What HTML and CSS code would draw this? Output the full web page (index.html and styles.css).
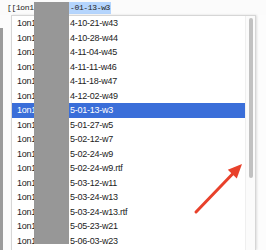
FILE: index.html
```html
<!DOCTYPE html>
<html>
<head>
<meta charset="utf-8">
<link rel="stylesheet" href="styles.css">
</head>
<body>
<div class="page">
  <div class="editor-line"><span class="pre">[[1on1 </span><span class="sel">-01-13-w3</span></div>
  <div class="body-row">
    <div class="leftbar"></div>
    <div class="popup">
      <div class="list">
        <div class="row"><span class="name">1on1</span><span class="rest">4-10-21-w43</span></div>
        <div class="row"><span class="name">1on1</span><span class="rest">4-10-28-w44</span></div>
        <div class="row"><span class="name">1on1</span><span class="rest">4-11-04-w45</span></div>
        <div class="row"><span class="name">1on1</span><span class="rest">4-11-11-w46</span></div>
        <div class="row"><span class="name">1on1</span><span class="rest">4-11-18-w47</span></div>
        <div class="row"><span class="name">1on1</span><span class="rest">4-12-02-w49</span></div>
        <div class="row selected"><span class="name">1on1</span><span class="rest">5-01-13-w3</span></div>
        <div class="row"><span class="name">1on1</span><span class="rest">5-01-27-w5</span></div>
        <div class="row"><span class="name">1on1</span><span class="rest">5-02-12-w7</span></div>
        <div class="row"><span class="name">1on1</span><span class="rest">5-02-24-w9</span></div>
        <div class="row"><span class="name">1on1</span><span class="rest">5-02-24-w9.rtf</span></div>
        <div class="row"><span class="name">1on1</span><span class="rest">5-03-12-w11</span></div>
        <div class="row"><span class="name">1on1</span><span class="rest">5-03-24-w13</span></div>
        <div class="row"><span class="name">1on1</span><span class="rest">5-03-24-w13.rtf</span></div>
        <div class="row"><span class="name">1on1</span><span class="rest">5-05-23-w21</span></div>
        <div class="row"><span class="name">1on1</span><span class="rest">5-06-03-w23</span></div>
      </div>
      <div class="scrolltrack"><div class="thumb"></div></div>
    </div>
  </div>
  <div class="redact"></div>
  <svg class="arrow" width="266" height="250" viewBox="0 0 266 250">
    <line x1="196" y1="212" x2="233" y2="173.5" stroke="#e8412b" stroke-width="3" stroke-linecap="round"/>
    <polygon points="242,164 236.8,178.5 227.8,169.8" fill="#e8412b"/>
  </svg>
</div>
</body>
</html>
```
FILE: styles.css
```css
html, body {
  margin: 0;
  padding: 0;
}
body {
  background: #f6f6f6;
  width: 266px;
  height: 250px;
  overflow: hidden;
}
.page {
  position: relative;
  width: 266px;
  height: 250px;
  overflow: hidden;
  background: #fafafa;
}
.editor-line {
  height: 15px;
  display: flex;
  align-items: center;
  padding-left: 7px;
  font-family: "Liberation Mono", "DejaVu Sans Mono", monospace;
  font-size: 8px;
  letter-spacing: -0.35px;
  color: #222;
  background: #fbfbfb;
}
.pre {
  width: 62px;
  white-space: pre;
}
.sel {
  background: #b5d5fd;
  padding: 1px 1px 1px 1px;
  line-height: 10px;
}
.body-row {
  display: flex;
  height: 235px;
  background: #fcfcfc;
}
.leftbar {
  width: 3px;
  margin-top: 13px;
  background: #9b9b9b;
}
.popup {
  margin-left: 8px;
  width: 243px;
  border: 1px solid #d6d6d6;
  border-bottom: none;
  background: #fff;
  display: flex;
  box-shadow: 1px 0 2px rgba(0,0,0,0.12);
}
.list {
  flex: 1;
  display: flex;
  flex-direction: column;
}
.row {
  height: 14.5px;
  display: flex;
  align-items: center;
  padding-left: 5px;
  font-family: "Liberation Sans", Arial, sans-serif;
  font-size: 9px;
  letter-spacing: -0.25px;
  color: #1c1c1c;
}
.row.selected {
  background: #3a6ed9;
  color: #fff;
}
.name {
  width: 53px;
}
.scrolltrack {
  width: 9px;
  background: #fbfbfb;
  border-left: 1px solid #efefef;
  display: flex;
  justify-content: center;
  padding-top: 2px;
}
.thumb {
  width: 4px;
  height: 160px;
  border-radius: 2px;
  background: #c1c1c1;
}
.redact {
  position: absolute;
  left: 34px;
  top: 2px;
  width: 35px;
  height: 242px;
  background: #979797;
}
.arrow {
  position: absolute;
  left: 0;
  top: 0;
}
```
